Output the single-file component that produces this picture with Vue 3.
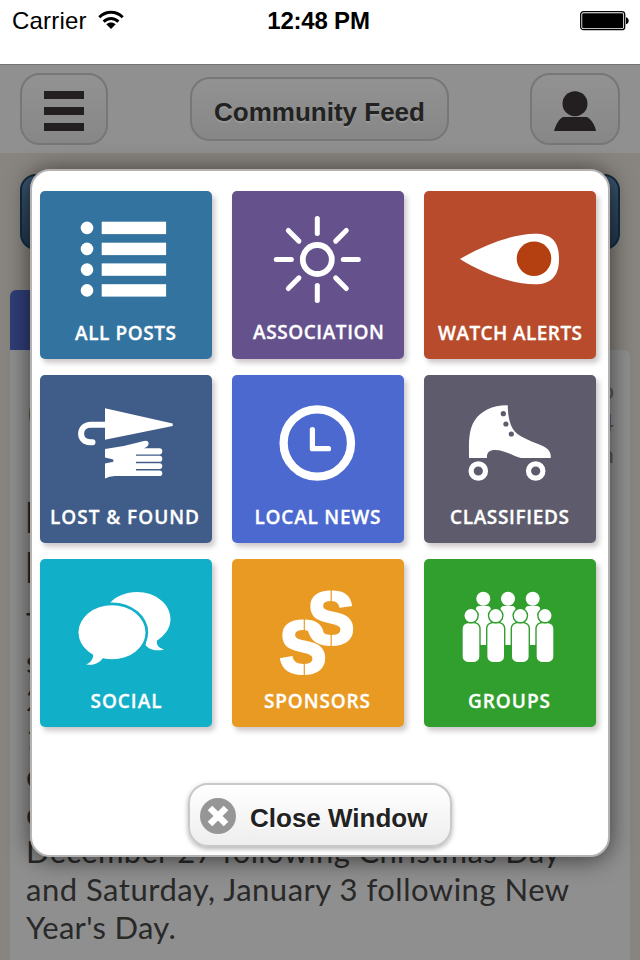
<script setup>
    import { ref } from 'vue'

    const isOpen = ref(true)

    // x / w - position and width of the label inside a 172x168 tile
    const tiles = [
        { id: 'posts', label: 'ALL POSTS', color: '#33739f', x: 35, w: 101, y: 149.3 },
        { id: 'association', label: 'ASSOCIATION', color: '#65518b', x: 21, w: 131, y: 148.3 },
        { id: 'alerts', label: 'WATCH ALERTS', color: '#b84b2c', x: 14, w: 144, y: 149.3 },
        { id: 'lost', label: 'LOST & FOUND', color: '#405c88', x: 10, w: 149, y: 149.3 },
        { id: 'news', label: 'LOCAL NEWS', color: '#4c69d0', x: 22.5, w: 126, y: 149.3 },
        { id: 'classifieds', label: 'CLASSIFIEDS', color: '#5e5c6c', x: 26, w: 119, y: 149.3 },
        { id: 'social', label: 'SOCIAL', color: '#11afc8', x: 50.5, w: 71, y: 149 },
        { id: 'sponsors', label: 'SPONSORS', color: '#e99a22', x: 32, w: 106, y: 149 },
        { id: 'groups', label: 'GROUPS', color: '#319f2e', x: 44, w: 82, y: 149 }
    ]

    const bars = [30.7, 51.7, 72.4, 93.2]
    const rays = [0, 45, 90, 135, 180, 225, 270, 315]
    const backRow = [59.3, 84, 108.7]
    const frontRow = [47, 71.7, 96.3, 121]

    function closeWindow() {
        isOpen.value = false
    }
</script>

<template>
    <div class="screen">
        <header class="status">
            <div class="carrier">
                <span>Carrier</span>
                <svg width="26" height="20" viewBox="0 0 26 20">
                    <g fill="none" stroke="#000" stroke-width="3">
                        <path d="M1.3 7.2 C8 .6 18 .6 24.7 7.2" />
                        <path d="M5.6 11.6 C10 7.4 16 7.4 20.4 11.6" />
                    </g>
                    <path d="M8.3 14.3 C11 11.8 15 11.8 17.7 14.3 L13 19 Z" />
                </svg>
            </div>
            <span class="time">12:48 PM</span>
            <svg class="battery" width="50" height="20" viewBox="0 0 50 20">
                <rect x=".7" y=".7" width="44" height="18" rx="2.8" fill="none" stroke="#000" stroke-width="1.3" />
                <rect x="2.2" y="2.2" width="41" height="15" rx="1.3" />
                <path d="M46 6.2 C49.6 7 49.6 12.4 46 13.2 Z" />
            </svg>
        </header>

        <nav class="toolbar">
            <button class="btn menu">
                <svg width="40" height="40" viewBox="0 0 40 40" fill="#231f20">
                    <rect width="40" height="8" />
                    <rect y="16" width="40" height="8" />
                    <rect y="32" width="40" height="8" />
                </svg>
            </button>
            <button class="btn feed">Community Feed</button>
            <button class="btn user">
                <svg width="42" height="40" viewBox="0 0 42 40" fill="#231f20">
                    <circle cx="21" cy="12.7" r="12.5" />
                    <path d="M0 40 C2 33 5 28 9 26 H33 C37 28 41 34 42 40 Z" />
                </svg>
            </button>
        </nav>

        <main class="page">
            <div class="post-bar"></div>
            <div class="tab"></div>
            <article class="card">
                <div class="meta">
                    <span class="avatar"></span>
                    <div class="date"><span>o</span><span>4</span><span>n</span></div>
                </div>
                <h1><span>H</span><span>H</span></h1>
                <div class="body">
                    <p>T</p>
                    <p>s</p>
                    <p>2</p>
                    <p>1</p>
                    <p>c</p>
                    <p>c</p>
                    <p class="dec">December 27 following Christmas Day</p>
                    <p class="jan">and Saturday, January 3 following New</p>
                    <p class="year">Year's Day.</p>
                </div>
            </article>
        </main>

        <section v-if="isOpen" class="popup">
            <div class="grid">
                <svg
                    v-for="tile in tiles"
                    :key="tile.id"
                    class="tile"
                    :style="{ backgroundColor: tile.color }"
                    viewBox="0 0 172 168"
                    fill="#fff"
                >
                    <g v-if="tile.id === 'posts'">
                        <template v-for="y in bars" :key="y">
                            <circle cx="47" :cy="y + 6.2" r="6.3" />
                            <rect x="61.7" :y="y" width="64.4" height="12.4" />
                        </template>
                    </g>

                    <g v-else-if="tile.id === 'association'" fill="none" stroke="#fff" stroke-linecap="round" transform="translate(85.3 68.5)">
                        <circle r="14.5" stroke-width="5.8" />
                        <path v-for="a in rays" :key="a" d="M0 -26 V-41" stroke-width="5" :transform="`rotate(${a})`" />
                    </g>

                    <g v-else-if="tile.id === 'alerts'">
                        <path d="M36 68 C58 55 88 42.7 111 42.7 C128 42.7 135 51 135 68 C135 85 127 93.3 111 93.3 C88 93.3 58 82 36 68 Z" />
                        <circle cx="110" cy="67.7" r="17.3" fill="#b44012" />
                    </g>

                    <g v-else-if="tile.id === 'lost'">
                        <path d="M65 33.3 L132.7 48.5 V51 L65 64.7 Z" />
                        <path d="M66 49.7 H51 C38 49.7 38 67.3 50 67.3 H52.5" fill="none" stroke="#fff" stroke-width="6" stroke-linecap="round" />
                        <path d="M65 74 Q85 71.5 104 66 Q108 64.8 108.6 68 Q109 71.5 104 73.3 H119.5 Q122.3 73.5 122.3 76 Q122.3 79.4 119.5 79.4 H96 V80.8 H119.5 Q122.3 81 122.3 83.7 Q122.3 86.8 119.5 86.8 H96 V88.2 H119.5 Q122.3 88.4 122.3 91 Q122.3 94 119.5 94 H96 V95.4 H119.5 Q122.3 95.6 122.3 98.2 Q122.3 101 119.5 101 H75 Q69 101 65 103.5 V88.6 L73.3 86.8 V84.6 L65 82.5 Z" />
                    </g>

                    <g v-else-if="tile.id === 'news'" fill="none" stroke="#fff">
                        <circle cx="85.3" cy="68" r="33.7" stroke-width="8.3" />
                        <path d="M80.4 54.5 V73.7 H96.5" stroke-width="5.2" stroke-linecap="round" stroke-linejoin="round" />
                    </g>

                    <g v-else-if="tile.id === 'classifieds'">
                        <path d="M83.7 30.3 C69 30 57 36 51 45 C44 55 45 69 45 83 H63 C62.5 78 65 75 71 75 C81 75.2 88 80.5 97 83 H126.7 C127.4 77.5 124.5 73.8 119.3 71.3 C109 66.5 98 63.5 91 56.7 C85 50 84 39 83.7 30.3 Z" />
                        <g fill="#5e5c6c">
                            <circle cx="79.3" cy="38.7" r="2.6" />
                            <circle cx="81.9" cy="49" r="2.6" />
                            <circle cx="87.3" cy="59" r="2.6" />
                        </g>
                        <g fill="none" stroke="#fff" stroke-width="5.2">
                            <circle cx="54.3" cy="96" r="7.2" />
                            <circle cx="111.7" cy="96" r="7.2" />
                        </g>
                    </g>

                    <g v-else-if="tile.id === 'social'">
                        <path d="M70 44 C76 37 86 33 97 33 C115.5 33 130.5 45 130.5 60 C130.5 69 125 76.5 117 81.5 C116 86 119 89 124 90.5 C117 92.5 109 91 105.5 86 C110 72 103 52 70 44 Z" />
                        <ellipse cx="72" cy="73.3" rx="36.2" ry="29.7" :fill="tile.color" />
                        <ellipse cx="72" cy="73.3" rx="33.5" ry="27" />
                        <path d="M53 94 C54 99 51 104 46 105.3 C53 107 59 104.5 63 99 Z" />
                    </g>

                    <g v-else-if="tile.id === 'sponsors'">
                        <g class="money">
                            <text x="47.5" y="114" textLength="47" lengthAdjust="spacingAndGlyphs">S</text>
                            <text x="75.5" y="85" textLength="47" lengthAdjust="spacingAndGlyphs">S</text>
                        </g>
                        <path d="M99.2 29 V43 M99.2 74 V88 M72.3 58 V72 M72.3 103 V117" :stroke="tile.color" stroke-width="1.2" />
                    </g>

                    <g v-else>
                        <template v-for="x in backRow" :key="x">
                            <circle :cx="x" cy="39.8" r="7" />
                            <path :d="`M${x - 7.5} 50.5 Q${x - 7.5} 47 ${x - 4} 47 H${x + 4} Q${x + 7.5} 47 ${x + 7.5} 50.5 V86 H${x - 7.5} Z`" />
                        </template>
                        <g :stroke="tile.color" stroke-width="1.4">
                            <template v-for="x in frontRow" :key="x">
                                <rect :x="x - 9" y="63.6" width="18" height="40" rx="6" />
                                <circle :cx="x" cy="56.6" r="7.2" />
                            </template>
                        </g>
                    </g>

                    <text class="label" :x="tile.x" :y="tile.y" :textLength="tile.w">{{ tile.label }}</text>
                </svg>
            </div>

            <button class="close" @click="closeWindow">
                <svg width="36" height="36" viewBox="0 0 36 36">
                    <circle cx="18" cy="18" r="18" fill="#969696" />
                    <path d="M10 10 L26 26 M26 10 L10 26" stroke="#fff" stroke-width="6.5" />
                </svg>
                <span>Close Window</span>
            </button>
        </section>
    </div>
</template>

<style>
    body {
        margin: 0;
        overflow: hidden;
    }
</style>

<style scoped>
    .screen {
        position: relative;
        display: flex;
        flex-direction: column;
        width: 640px;
        height: 960px;
        overflow: hidden;
        background: #88847f;
        font-family: "Liberation Sans", Arial, sans-serif;
    }

    .status {
        display: grid;
        grid-template-columns: 1fr auto 1fr;
        align-items: start;
        flex: none;
        box-sizing: border-box;
        height: 64px;
        padding: 7px 12px 0 12px;
        background: #fff;
        color: #000;
        font-size: 24px;
        line-height: 28px;
    }

    .carrier {
        display: flex;
        gap: 11px;
        letter-spacing: 0.2px;
    }

    .carrier svg {
        margin-top: 3px;
    }

    .time {
        margin-right: 3px;
        font-weight: bold;
        letter-spacing: -0.2px;
    }

    .battery {
        justify-self: end;
        margin: 4px -2px 0 0;
    }

    .toolbar {
        display: flex;
        justify-content: space-between;
        align-items: center;
        flex: none;
        box-sizing: border-box;
        height: 89px;
        padding: 0 20px;
        border-top: 1px solid #737373;
        background: #909090;
    }

    .btn {
        display: flex;
        align-items: center;
        justify-content: center;
        box-sizing: border-box;
        height: 72px;
        padding: 0;
        border: 2px solid #777;
        border-radius: 20px;
        background: linear-gradient(#929292, #878787);
        color: #222;
        font: bold 26px "Liberation Sans", Arial, sans-serif;
    }

    .menu {
        width: 88px;
        padding-top: 4px;
    }

    .feed {
        width: 259px;
        height: 64px;
        padding: 7px 0 0 1px;
        text-shadow: 0 2px 0 #989898;
    }

    .user {
        width: 90px;
        padding-top: 4px;
    }

    .page {
        display: flex;
        flex-direction: column;
        flex: 1;
        padding: 21px 10px 0;
    }

    .post-bar {
        box-sizing: border-box;
        height: 76px;
        margin: 0 10px;
        border: 2px solid #102c3d;
        border-radius: 16px;
        background: linear-gradient(#3b5771, #23364e);
    }

    .tab {
        width: 200px;
        height: 60px;
        margin-top: 40px;
        border-radius: 6px 0 0;
        background: #303e78;
    }

    .card {
        flex: 1;
        padding: 30px 16px 0;
        border-radius: 0 6px 0 0;
        background: #8f8f8f;
        color: #292929;
    }

    .meta {
        display: flex;
        justify-content: space-between;
        height: 112px;
        color: #555;
        font: 24px/32px Lato, sans-serif;
    }

    .avatar {
        width: 60px;
        height: 60px;
        margin: 4px 0 0 3px;
        border-radius: 50%;
        background: #425b36;
    }

    .date {
        display: flex;
        flex-direction: column;
        align-items: flex-end;
        margin-top: -6px;
    }

    h1 {
        display: flex;
        flex-direction: column;
        margin: 0 0 0 -2px;
        font: 43px/49.5px Lato, sans-serif;
        padding-bottom: 13px;
    }

    .body {
        font: 31px/38px Lato, sans-serif;
    }

    .body p {
        margin: 0;
        white-space: nowrap;
    }

    .body .dec {
        letter-spacing: 0.32px;
    }

    .body .jan {
        letter-spacing: 0.5px;
    }

    .body .year {
        letter-spacing: 0.3px;
    }

    .popup {
        position: absolute;
        top: 169px;
        left: 30px;
        display: flex;
        flex-direction: column;
        align-items: center;
        box-sizing: border-box;
        width: 580px;
        height: 688px;
        padding: 20px 8px 0;
        border: 2px solid #b5b3b2;
        border-radius: 20px;
        background: #fff;
        box-shadow: 0 2px 24px rgba(0, 0, 0, 0.6);
    }

    .grid {
        display: grid;
        grid-template-columns: repeat(3, 172px);
        grid-auto-rows: 168px;
        gap: 16px 20px;
        align-self: flex-start;
    }

    .tile {
        width: 172px;
        height: 168px;
        border-radius: 5px;
        box-shadow: 3px 4px 5px rgba(60, 40, 50, 0.25);
    }

    .label {
        font: 600 19px "Open Sans", sans-serif;
        stroke: #fff;
        stroke-width: 0.3px;
    }

    .money {
        font: bold 74px "Liberation Sans", Arial, sans-serif;
        stroke: #fff;
        stroke-width: 3px;
    }

    .close {
        display: flex;
        align-items: center;
        gap: 14px;
        box-sizing: border-box;
        width: 264px;
        height: 64px;
        margin-top: 56px;
        padding: 0 10px;
        border: 2px solid #c8c8c8;
        border-radius: 20px;
        background: linear-gradient(#fff, #eee);
        box-shadow: 0 2px 5px rgba(0, 0, 0, 0.3);
        color: #222;
        font: bold 26px "Liberation Sans", Arial, sans-serif;
    }

    .close svg {
        margin-top: 1px;
    }

    .close span {
        padding-top: 7px;
        text-shadow: 0 2px 0 #fff;
    }
</style>
